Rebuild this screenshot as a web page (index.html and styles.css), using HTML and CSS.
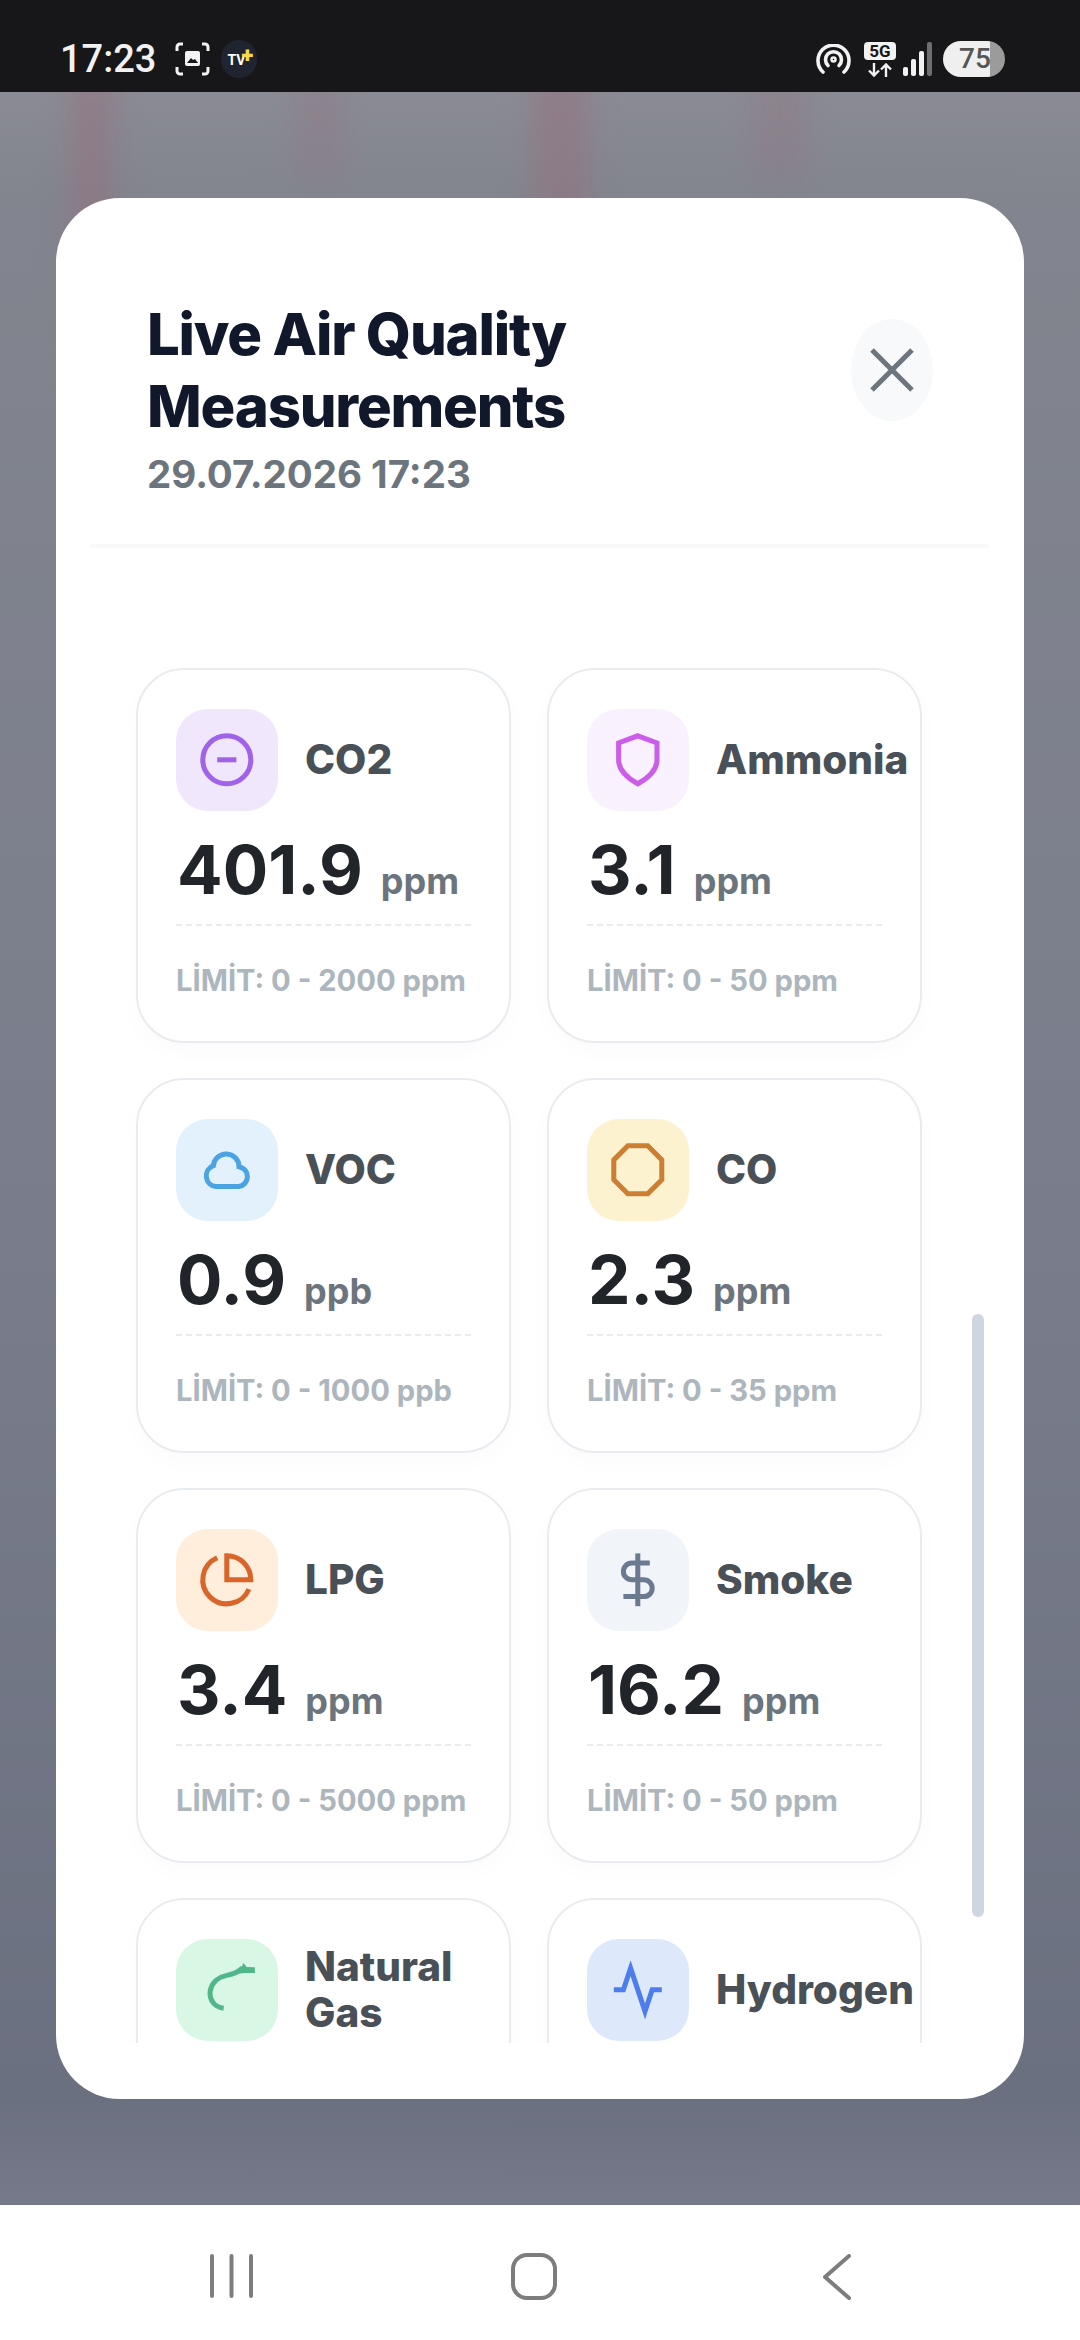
FILE: index.html
```html
<!DOCTYPE html>
<html lang="tr">
<head>
  <meta charset="UTF-8" />
  <meta name="viewport" content="width=device-width, initial-scale=1.0"/>
  <title>Live Air Quality Measurements</title>
  <link rel="stylesheet" href="styles.css">
</head>
<body>
  <div class="status-bar">
    <div class="status-left">
      <span class="clock">17:23</span>
      <svg class="shot-icon" viewBox="0 0 35 34" fill="none" stroke="#f2f2f2" stroke-width="3">
        <path d="M8 2H5a3 3 0 0 0-3 3v4M27 2h3a3 3 0 0 1 3 3v4M8 32H5a3 3 0 0 1-3-3v-4M27 32h3a3 3 0 0 0 3-3v-4"/>
        <rect x="10" y="9" width="15" height="15" rx="2" fill="#f2f2f2" stroke="none"/>
        <path d="M12 21l4-5 2 2 2-1 3 4z" fill="#17171a" stroke="none"/>
      </svg>
      <span class="tv-badge">TV<b>+</b></span>
    </div>
    <div class="status-right">
      <svg class="hotspot-icon" viewBox="0 0 35 30" fill="none" stroke="#f2f2f2" stroke-width="3.6" stroke-linecap="round">
        <path d="M7 28A15.5 15.5 0 1 1 28 28"/>
        <path d="M12 21.500A8 8 0 1 1 23 21.500"/>
        <circle cx="17.500" cy="15.500" r="2" stroke-width="2.500"/>
      </svg>
      <div class="net">
        <span class="net-label">5G</span>
        <svg class="net-arrows" viewBox="0 0 26 14" fill="none" stroke="#f2f2f2" stroke-width="2.400">
          <path d="M7 0v12M2 7.500l5 5 5-5M19 14V2M14 6.500l5-5 5 5"/>
        </svg>
      </div>
      <div class="signal">
        <i class="bar-1"></i><i class="bar-2"></i><i class="bar-3"></i><i class="bar-4"></i>
      </div>
      <div class="battery">75</div>
    </div>
  </div>

  <div class="scrim">
    <span class="streak streak-1"></span>
    <span class="streak streak-2"></span>
    <span class="streak streak-3"></span>
    <span class="streak streak-4"></span>

    <div class="modal">
      <div class="modal-head">
        <div>
          <h2>Live Air Quality Measurements</h2>
          <div class="modal-date">29.07.2026 17:23</div>
        </div>
        <button class="close-btn" aria-label="Close">
          <svg viewBox="0 0 44 44" fill="none" stroke="#6c757d" stroke-width="5"><path d="M2 2l40 40M42 2L2 42"/></svg>
        </button>
      </div>

      <div class="sensor-list">
        <div class="card">
          <div class="card-head">
            <div class="icon-box purple">
              <svg viewBox="0 0 24 24"><circle cx="12" cy="12" r="10"/><path d="M8 12h8"/></svg>
            </div>
            <span class="card-title">CO2</span>
          </div>
          <div class="reading"><span class="value">401.9</span><span class="unit">ppm</span></div>
          <div class="limit">LİMİT: 0 - 2000 ppm</div>
        </div>

        <div class="card">
          <div class="card-head">
            <div class="icon-box pink">
              <svg viewBox="0 0 24 24"><path d="M12 2l8 3v7c0 4-3.500 7.500-8 10-4.500-2.500-8-6-8-10V5z"/></svg>
            </div>
            <span class="card-title">Ammonia</span>
          </div>
          <div class="reading"><span class="value">3.1</span><span class="unit">ppm</span></div>
          <div class="limit">LİMİT: 0 - 50 ppm</div>
        </div>

        <div class="card">
          <div class="card-head">
            <div class="icon-box blue">
              <svg viewBox="0 0 24 24"><path d="M7.500 19H17a4.200 4.200 0 0 0 .1-8.300A5.360 5.360 0 0 0 6.400 10.300 4.500 4.500 0 0 0 7.500 19z"/></svg>
            </div>
            <span class="card-title">VOC</span>
          </div>
          <div class="reading"><span class="value">0.9</span><span class="unit">ppb</span></div>
          <div class="limit">LİMİT: 0 - 1000 ppb</div>
        </div>

        <div class="card">
          <div class="card-head">
            <div class="icon-box amber">
              <svg viewBox="0 0 24 24"><path d="M7.860 2h8.280L22 7.860v8.280L16.140 22H7.860L2 16.140V7.860z"/></svg>
            </div>
            <span class="card-title">CO</span>
          </div>
          <div class="reading"><span class="value">2.3</span><span class="unit">ppm</span></div>
          <div class="limit">LİMİT: 0 - 35 ppm</div>
        </div>

        <div class="card">
          <div class="card-head">
            <div class="icon-box orange">
              <svg viewBox="0 0 24 24"><path d="M21.210 15.890A10 10 0 1 1 8 2.830"/><path d="M22 12A10 10 0 0 0 12 2v10z"/></svg>
            </div>
            <span class="card-title">LPG</span>
          </div>
          <div class="reading"><span class="value">3.4</span><span class="unit">ppm</span></div>
          <div class="limit">LİMİT: 0 - 5000 ppm</div>
        </div>

        <div class="card">
          <div class="card-head">
            <div class="icon-box slate">
              <svg viewBox="0 0 24 24"><path d="M12 1v22"/><path d="M17 5H9.500a3.500 3.500 0 0 0 0 7h5a3.500 3.500 0 0 1 0 7H6"/></svg>
            </div>
            <span class="card-title">Smoke</span>
          </div>
          <div class="reading"><span class="value">16.2</span><span class="unit">ppm</span></div>
          <div class="limit">LİMİT: 0 - 50 ppm</div>
        </div>

        <div class="card">
          <div class="card-head">
            <div class="icon-box green">
              <svg viewBox="0 0 24 24">
                <path d="M10.700 19.700C6.500 19.200 4.600 15.800 5.100 12.500 5.700 8.600 9 6.600 12 6c3-.6 5-1.500 6.600-3.200"/>
                <path class="solid" d="M18.900.8l1.400 1.700 3.400.1V5h-4.200l-2.600.3z"/>
              </svg>
            </div>
            <span class="card-title">Natural Gas</span>
          </div>
        </div>

        <div class="card">
          <div class="card-head">
            <div class="icon-box indigo">
              <svg viewBox="0 0 24 24"><path d="M22 12h-4l-3 9-6-18-3 9H2"/></svg>
            </div>
            <span class="card-title">Hydrogen</span>
          </div>
        </div>
      </div>

      <span class="scroll-thumb"></span>
    </div>
  </div>

  <div class="nav-bar">
    <svg class="nav-recent" viewBox="0 0 43 44" fill="none" stroke="#7d7d7d" stroke-width="4" stroke-linecap="round">
      <path d="M2 2v40M21.500 2v40M41 2v40"/>
    </svg>
    <svg class="nav-home" viewBox="0 0 46 47" fill="none" stroke="#7d7d7d" stroke-width="4">
      <rect x="2" y="2" width="42" height="43" rx="14"/>
    </svg>
    <svg class="nav-back" viewBox="0 0 28 46" fill="none" stroke="#7d7d7d" stroke-width="4" stroke-linecap="round" stroke-linejoin="round">
      <path d="M26 2L2 23l24 21"/>
    </svg>
  </div>
</body>
</html>
```

FILE: styles.css
```css
* {
  box-sizing: border-box;
}

body {
  margin: 0;
  width: 1080px;
  height: 2340px;
  display: flex;
  flex-direction: column;
  overflow: hidden;
  font-family: 'Inter', 'Liberation Sans', sans-serif;
  background: #fff;
}

/* status bar */
.status-bar {
  height: 92px;
  flex-shrink: 0;
  display: flex;
  justify-content: space-between;
  align-items: center;
  padding: 26px 75px 0 60px;
  background: #17171a;
  color: #f2f2f2;
  font-family: 'Roboto', sans-serif;
}

.status-left,
.status-right {
  display: flex;
  align-items: center;
}

.clock {
  font-size: 38px;
  font-weight: 500;
}

.shot-icon {
  width: 35px;
  height: 34px;
  margin-left: 19px;
}

.tv-badge {
  width: 36px;
  height: 38px;
  margin-left: 11px;
  border-radius: 18px;
  background: #1f2430;
  color: #fff;
  font-size: 14px;
  font-weight: 700;
  line-height: 40px;
  padding-left: 6px;
  position: relative;
}

.tv-badge b {
  position: absolute;
  top: -4px;
  left: 20px;
  color: #f7d94a;
  font-size: 22px;
}

.hotspot-icon {
  width: 35px;
  height: 30px;
}

.net {
  width: 32px;
  margin-left: 13px;
  display: flex;
  flex-direction: column;
  align-items: center;
}

.net-label {
  width: 32px;
  height: 18px;
  border-radius: 4px;
  background: #f2f2f2;
  color: #17171a;
  font-size: 17px;
  font-weight: 700;
  line-height: 18px;
  text-align: center;
}

.net-arrows {
  width: 26px;
  height: 14px;
  margin-top: 3px;
}

.signal {
  height: 34px;
  margin-left: 7px;
  display: flex;
  align-items: flex-end;
  gap: 3px;
}

.signal i {
  width: 5px;
  border-radius: 2px;
  background: #f2f2f2;
}

.bar-1 { height: 9px; }
.bar-2 { height: 17px; }
.bar-3 { height: 25px; }
.signal .bar-4 { height: 34px; background: #6f6f6f; }

.battery {
  width: 62px;
  height: 36px;
  margin-left: 11px;
  border-radius: 18px;
  background: linear-gradient(90deg, #efefef 47px, #9b9b9b 47px);
  color: #555;
  font-size: 28px;
  font-weight: 500;
  line-height: 36px;
  padding-left: 16px;
}

/* dimmed page behind the modal */
.scrim {
  flex: 1;
  position: relative;
  overflow: hidden;
  padding: 106px 56px;
  background: linear-gradient(180deg, #8a8b94 0%, #82858e 5%, #7a7e8c 50%, #6b7080 95%, #767a8b 100%);
}

.streak {
  position: absolute;
  top: -20px;
  background: #94707e;
  filter: blur(14px);
  opacity: 0.5;
}

.streak-1 { left: 70px; width: 44px; height: 300px; }
.streak-2 { left: 296px; width: 48px; height: 110px; opacity: 0.28; border-radius: 0 0 24px 24px; }
.streak-3 { left: 532px; width: 58px; height: 300px; }
.streak-4 { left: 752px; width: 56px; height: 110px; opacity: 0.28; border-radius: 0 0 24px 24px; }

.modal {
  position: relative;
  height: 1901px;
  display: flex;
  flex-direction: column;
  border-radius: 64px;
  background: #fff;
}

.modal-head {
  height: 350px;
  flex-shrink: 0;
  margin: 0 35px 0 34px;
  padding: 100px 56px 0 57px;
  display: flex;
  justify-content: space-between;
  align-items: flex-start;
  border-bottom: 4px solid #f8f9fa;
}

h2 {
  width: 480px;
  margin: 0;
  color: #12182b;
  font-size: 58px;
  font-weight: 800;
  line-height: 72px;
  letter-spacing: -1.2px;
}

.modal-date {
  margin-top: 9px;
  color: #6c757d;
  font-size: 38.5px;
  font-weight: 700;
  line-height: 46px;
}

.close-btn {
  width: 82px;
  height: 102px;
  margin-top: 21px;
  padding: 0;
  display: flex;
  justify-content: center;
  align-items: center;
  border: none;
  border-radius: 50%;
  background: #f8f9fa;
}

.close-btn svg {
  width: 44px;
  height: 44px;
}

/* sensor cards */
.sensor-list {
  flex: 1;
  min-height: 0;
  margin-bottom: 56px;
  overflow: hidden;
  padding: 120px 0 0 80px;
  display: grid;
  grid-template-columns: 375px 375px;
  grid-auto-rows: 375px;
  column-gap: 36px;
  row-gap: 35px;
}

.card {
  padding: 39px 38px 0;
  border: 2px solid #e9ecef;
  border-radius: 48px;
  background: #fff;
  box-shadow: 0 8px 24px rgba(0,0,0,0.02);
}

.card-head {
  height: 102px;
  display: flex;
  align-items: center;
  gap: 27px;
}

.icon-box {
  width: 102px;
  height: 102px;
  flex-shrink: 0;
  display: flex;
  justify-content: center;
  align-items: center;
  border-radius: 32px;
}

.icon-box svg {
  width: 57.6px;
  height: 57.6px;
  fill: none;
  stroke: currentColor;
  stroke-width: 2.1;
}

.icon-box .solid {
  fill: currentColor;
  stroke: none;
}

.purple { background: #f1e7fd; color: #a162ea; }
.pink { background: #faf1fe; color: #cc5de8; }
.blue { background: #e3f1fc; color: #4ba3e3; }
.amber { background: #fdf2d0; color: #cc7f32; }
.orange { background: #feeedb; color: #d9652b; }
.slate { background: #f1f5fa; color: #6b7a90; }
.green { background: #d8f7e5; color: #52b788; }
.indigo { background: #dee8fb; color: #4d7cec; }

.card-title {
  min-width: 0;
  color: #495057;
  font-size: 40.5px;
  font-weight: 800;
  line-height: 46px;
}

.reading {
  height: 80px;
  margin-top: 19px;
  display: flex;
  align-items: baseline;
}

.value {
  color: #212529;
  font-size: 67.5px;
  font-weight: 700;
  line-height: 80px;
  padding-left: 1px;
}

.unit {
  margin-left: 18px;
  color: #6c757d;
  font-size: 36px;
  font-weight: 700;
}

.limit {
  margin-top: 14px;
  padding-top: 35px;
  border-top: 2px dashed #e9ecef;
  color: #adb5bd;
  font-size: 29.2px;
  font-weight: 700;
  line-height: 40px;
  white-space: nowrap;
}

.scroll-thumb {
  position: absolute;
  top: 1116px;
  right: 40px;
  width: 12px;
  height: 603px;
  border-radius: 6px;
  background: #ced6e2;
}

/* android nav */
.nav-bar {
  height: 135px;
  flex-shrink: 0;
  position: relative;
  background: #fff;
}

.nav-bar svg {
  position: absolute;
}

.nav-recent { left: 210px; top: 49px; width: 43px; height: 44px; }
.nav-home { left: 511px; top: 48px; width: 46px; height: 47px; }
.nav-back { left: 823px; top: 49px; width: 28px; height: 46px; }
```
